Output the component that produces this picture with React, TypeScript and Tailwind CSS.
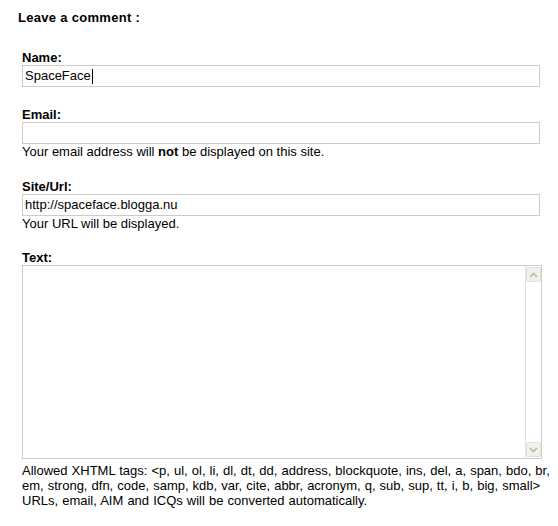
import React from "react";

const font = { fontFamily: '"Liberation Sans", Arial, sans-serif' };

function Field({ label, value, helper, caret }: { label: string; value?: string; helper?: React.ReactNode; caret?: boolean }) {
  return (
    <div>
      <div className="text-[13px] leading-[15px] font-bold text-black">{label}</div>
      <div className="w-[518px] h-[22px] border border-[#cccccc] bg-white flex items-center px-[2px] text-[13px] text-black whitespace-nowrap">
        <span>{value}</span>
        {caret && <span className="inline-block w-px h-[15px] bg-black ml-px" />}
      </div>
      {helper && <div className="text-[13px] leading-[15px] text-black whitespace-nowrap">{helper}</div>}
    </div>
  );
}

function Chevron({ up }: { up?: boolean }) {
  return (
    <svg width="9" height="6" viewBox="0 0 9 6">
      <path d={up ? "M1 5 L4.5 1.5 L8 5" : "M1 1 L4.5 4.5 L8 1"} fill="none" stroke="#b8b8b0" strokeWidth="1.6" />
    </svg>
  );
}

export default function App() {
  return (
    <div className="w-[558px] h-[526px] bg-white text-black" style={font}>
      <div className="pt-[10px] pl-[18px] text-[13px] leading-[15px] font-bold tracking-[0.3px]">Leave a comment :</div>
      <div className="pl-[22px] pt-[25px] flex flex-col">
        <Field label="Name:" value="SpaceFace" caret />
        <div className="mt-[20px]">
          <Field
            label="Email:"
            helper={
              <>
                Your email address will <b>not</b> be displayed on this site.
              </>
            }
          />
        </div>
        <div className="mt-[20px]">
          <Field label="Site/Url:" value="http://spaceface.blogga.nu" helper="Your URL will be displayed." />
        </div>
        <div className="mt-[19px]">
          <div className="text-[13px] leading-[15px] font-bold">Text:</div>
          <div className="w-[520px] h-[194px] border border-[#cccccc] bg-white flex justify-end">
            <div className="w-[16px] h-full border-l border-[#e2e2e2] flex flex-col justify-between items-center py-px">
              <div className="w-[15px] h-[15px] bg-[#f1f0ea] border border-[#e4e3da] rounded-[2px] flex items-center justify-center">
                <Chevron up />
              </div>
              <div className="w-[15px] h-[15px] bg-[#f1f0ea] border border-[#e4e3da] rounded-[2px] flex items-center justify-center">
                <Chevron />
              </div>
            </div>
          </div>
          <div className="mt-[4px] text-[13px] leading-[15px] whitespace-nowrap [word-spacing:0.45px]">
            Allowed XHTML tags: &lt;p, ul, ol, li, dl, dt, dd, address, blockquote, ins, del, a, span, bdo, br,
            <br />
            em, strong, dfn, code, samp, kdb, var, cite, abbr, acronym, q, sub, sup, tt, i, b, big, small&gt;
            <br />
            URLs, email, AIM and ICQs will be converted automatically.
          </div>
        </div>
      </div>
    </div>
  );
}
